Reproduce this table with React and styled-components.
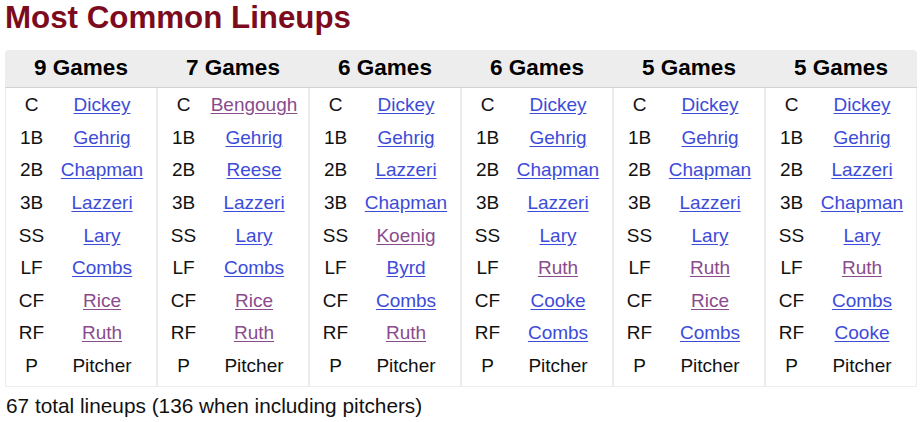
import styled, { createGlobalStyle } from "styled-components";

const GlobalStyle = createGlobalStyle`
  body {
    margin: 0;
    background: #ffffff;
    font-family: "Liberation Sans", Arial, sans-serif;
    color: #111;
  }
`

const Page = styled.div`
  padding: 0 4px 0 5px;
`

const Title = styled.h1`
  margin: 0 0 14px 0;
  font-size: 31.3px;
  line-height: 36px;
  font-weight: 700;
  color: #7c0b1e;
`

const LineupTable = styled.div`
  width: 912px;
  display: grid;
  grid-template-columns: repeat(6, 152px);
`

const HeadCell = styled.div`
  height: 38px;
  display: flex;
  align-items: center;
  justify-content: center;
  padding-bottom: 1px;
  background: #eeeded;
  border-bottom: 1px solid #d2d2d2;
  box-sizing: border-box;
  font-size: 22.5px;
  font-weight: 700;
  color: #000;
  border-top-left-radius: ${p => (p.$first ? "4px" : "0")};
  border-top-right-radius: ${p => (p.$last ? "4px" : "0")};
`

const LineupColumn = styled.div`
  display: grid;
  grid-template-columns: 51px 90px;
  grid-auto-rows: 32.6px;
  padding: 1px 0 4px 0;
  box-sizing: border-box;
  border-left: ${p => (p.$first ? "1px" : "2px")} solid #ececec;
  border-right: ${p => (p.$last ? "1px solid #ececec" : "none")};
  border-bottom: 1px solid #ececec;
  margin-left: ${p => (p.$first ? "0" : "-1px")};
`

const Pos = styled.div`
  display: flex;
  align-items: center;
  justify-content: center;
  font-size: 19px;
  color: #111;
`

const Name = styled.div`
  display: flex;
  align-items: center;
  justify-content: center;
  font-size: 19px;
  white-space: nowrap;

  a {
    color: #3d4bd9;
    text-decoration: underline;
    text-underline-offset: 2px;
  }
  a.visited {
    color: #8a4b8d;
  }
`

const Footer = styled.p`
  margin: 7px 0 0 1px;
  font-size: 20.8px;
  color: #111;
`

const visited = ["Bengough", "Rice", "Ruth", "Koenig"]
const positions = ["C", "1B", "2B", "3B", "SS", "LF", "CF", "RF", "P"]

const lineups = [
  { games: 9, players: ["Dickey", "Gehrig", "Chapman", "Lazzeri", "Lary", "Combs", "Rice", "Ruth"] },
  { games: 7, players: ["Bengough", "Gehrig", "Reese", "Lazzeri", "Lary", "Combs", "Rice", "Ruth"] },
  { games: 6, players: ["Dickey", "Gehrig", "Lazzeri", "Chapman", "Koenig", "Byrd", "Combs", "Ruth"] },
  { games: 6, players: ["Dickey", "Gehrig", "Chapman", "Lazzeri", "Lary", "Ruth", "Cooke", "Combs"] },
  { games: 5, players: ["Dickey", "Gehrig", "Chapman", "Lazzeri", "Lary", "Ruth", "Rice", "Combs"] },
  { games: 5, players: ["Dickey", "Gehrig", "Lazzeri", "Chapman", "Lary", "Ruth", "Combs", "Cooke"] },
]

function App() {
  return (
    <Page>
      <GlobalStyle />
      <Title>Most Common Lineups</Title>
      <LineupTable>
        {lineups.map((l, i) => (
          <HeadCell key={"h" + i} $first={i === 0} $last={i === lineups.length - 1}>
            {l.games} Games
          </HeadCell>
        ))}
        {lineups.map((l, i) => (
          <LineupColumn key={"c" + i} $first={i === 0} $last={i === lineups.length - 1}>
            {positions.map((pos, j) => [
              <Pos key={"p" + j}>{pos}</Pos>,
              <Name key={"n" + j}>
                {pos === "P" ? (
                  "Pitcher"
                ) : (
                  <a href="#" className={visited.includes(l.players[j]) ? "visited" : ""}>
                    {l.players[j]}
                  </a>
                )}
              </Name>,
            ])}
          </LineupColumn>
        ))}
      </LineupTable>
      <Footer>67 total lineups (136 when including pitchers)</Footer>
    </Page>
  )
}

export default App
